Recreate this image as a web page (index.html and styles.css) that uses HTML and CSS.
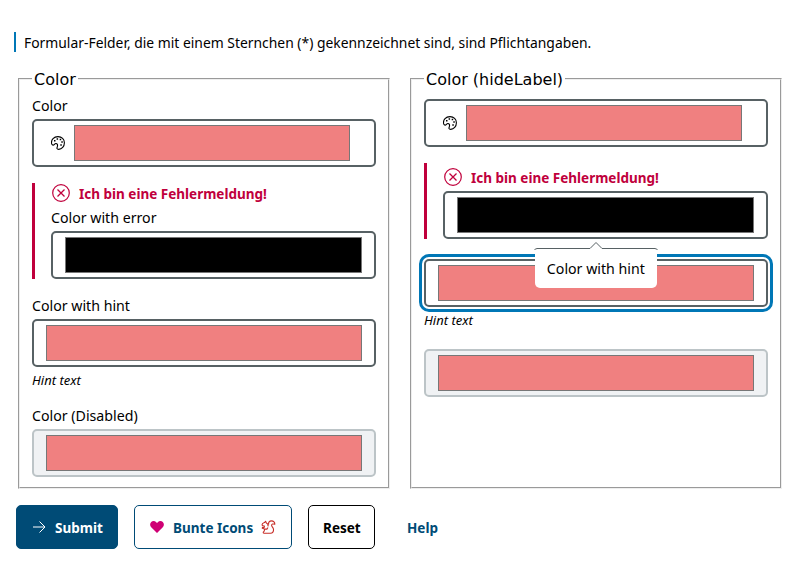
FILE: index.html
```html
<!DOCTYPE html>
<html lang="de">
<head>
<meta charset="utf-8">
<title>Color</title>
<link rel="stylesheet" href="styles.css">
</head>
<body>
<svg class="defs" width="0" height="0">
  <symbol id="palette" viewBox="0 0 14 14"><path d="M.6 7.7C-.1 3.500 3 .6 7 .6c3.800 0 6.400 2.700 6.400 6.100 0 3.700-2.600 6.700-5.700 6.700-2 0-2-1.200-1.400-2.700.6-1.700.1-3.200-1.400-3.200-1.300 0-1.700 1.800-2.900 1.600C1.200 9 .8 8.600.6 7.700Z" fill="none" stroke="currentColor" stroke-width="1.100"/><path d="M3 4h1.500v1.500H3zM5.600 2.300h1.500v1.500H5.600zM8.700 2.800h1.500v1.500H8.700zM10.300 5.300h1.500v1.500h-1.500zM9.300 8.300h1.500v1.500H9.300z" fill="currentColor"/></symbol>
  <symbol id="error" viewBox="0 0 18 18"><circle cx="9" cy="9" r="8.300" fill="none" stroke="currentColor" stroke-width="1.200"/><path d="m5.500 5.500 7 7m0-7-7 7" stroke="currentColor" stroke-width="1.300"/></symbol>
</svg>
<p class="note"><span class="text">Formular-Felder, die mit einem Sternchen (*) gekennzeichnet sind, sind Pflichtangaben.</span></p>
<form>
  <div class="columns">
    <fieldset>
      <legend>Color</legend>
      <label class="label">Color</label>
      <div class="field with-icon"><svg class="palette"><use href="#palette"/></svg><div class="swatch"></div></div>
      <div class="error">
        <div class="message"><svg><use href="#error"/></svg><span class="bold">Ich bin eine Fehlermeldung!</span></div>
        <label class="label">Color with error</label>
        <div class="field"><div class="swatch black"></div></div>
      </div>
      <label class="label">Color with hint</label>
      <div class="field"><div class="swatch"></div></div>
      <div class="hint">Hint text</div>
      <label class="label">Color (Disabled)</label>
      <div class="field disabled"><div class="swatch"></div></div>
    </fieldset>
    <fieldset>
      <legend>Color (hideLabel)</legend>
      <div class="field with-icon"><svg class="palette"><use href="#palette"/></svg><div class="swatch"></div></div>
      <div class="error">
        <div class="message unlabelled"><svg><use href="#error"/></svg><span class="bold">Ich bin eine Fehlermeldung!</span></div>
        <div class="field"><div class="swatch black"></div></div>
      </div>
      <div class="field focused"><div class="swatch"></div>
        <div class="tooltip"><svg class="edge" viewBox="0 0 124 10"><path d="M.5 9.500 3 8.500h53l6-6 6 6h53l2.500 1" fill="#fff" stroke="#576164"/></svg><span class="tip-text">Color with hint</span></div>
      </div>
      <div class="hint">Hint text</div>
      <div class="field disabled"><div class="swatch"></div></div>
    </fieldset>
  </div>
  <div class="actions">
    <button type="button" class="submit"><svg width="14" height="14" viewBox="0 0 14 14"><path d="M1 7h12M7.500 1.500 13 7l-5.500 5.500" fill="none" stroke="currentColor"/></svg><span class="bold">Submit</span></button>
    <button type="button" class="bunte"><svg width="14" height="14" viewBox="0 0 14 14"><path d="M7 13 1.200 7.200C-.3 5.600-.2 3.200 1.200 1.900 2.700.6 5 .8 6.200 2.200L7 3l.8-.8C9 .8 11.300.6 12.800 1.900c1.400 1.300 1.500 3.700 0 5.300Z" fill="#cf0074"/></svg><span class="bold">Bunte Icons</span><svg class="squirrel" width="15" height="14" viewBox="0 0 15 14"><path d="M7 6.300C7.300 5 6.700 3.500 5.300 2.900L4.600 1.300 3.400 2.600C2.200 3 1 3.900 1 4.900c0 .8 1.400 1 2.400 1.200L3.200 7.500 1.500 7.200 1.300 8.300l2.200.8-.2 1.900-1 1.200c-.2.700.1 1 .7 1h6.500c2.100 0 3.300-1.700 3-3.900-.2-1.700-1.900-2.600-1.900-4C10.600 3.900 12 3.600 13.800 4.300c.2-1.800-1.300-3.400-3.300-3.400C8.300.9 7.300 2.500 7.600 4.500M3.500 9.100h2.400L7 7.500" fill="none" stroke="#c72e28" stroke-width="1.100" stroke-linejoin="round"/></svg></button>
    <button type="button" class="reset"><span class="bold">Reset</span></button>
    <a class="help"><span class="bold">Help</span></a>
  </div>
</form>
</body>
</html>
```
FILE: styles.css
```css
* { box-sizing: border-box; }
body { margin: 0; padding: 32px 18px 0; background: #fff; color: #000; font-family: "Noto Sans", sans-serif; font-size: 15px; white-space: nowrap; }
.defs { display: none; }
.note { margin: 0 0 0 -4px; height: 20px; line-height: 21px; border-left: 2px solid #0077b6; padding-left: 8px; }
.text { display: inline-block; transform: scaleX(.925); transform-origin: left; }
.columns { display: grid; grid-template-columns: 372px 372px; gap: 20px; margin-top: 17px; height: 420px; }
fieldset { margin: 0; min-width: 0; padding: 10px 12px; border: 2px groove #eee; }
legend { height: 20px; padding: 0 2px; font: 16px/21px "DejaVu Sans", sans-serif; }
.label { display: block; width: max-content; height: 20px; line-height: 12px; transform: scaleX(.945); transform-origin: left; }
.field { position: relative; height: 48px; border: 2px solid #576164; border-radius: 5px; padding: 4px 12px; background: #fff; display: flex; align-items: center; }
.with-icon { padding-left: 17px; padding-right: 24px; }
.palette { width: 14px; height: 14px; margin-right: 9px; }
.swatch { flex: 1; height: 36px; background: #f08080; border: 1px solid #777; }
.black { background: #000; }
.error { margin: 16px 0 20px; border-left: 3px solid #c0003c; padding-left: 16px; }
.message { height: 28px; line-height: 21px; color: #c0003c; display: flex; }
.unlabelled { padding-top: 4px; }
.message svg { width: 18px; height: 18px; margin: 1px 9px 0 1px; }
.bold { display: inline-block; font-weight: 700; transform: scaleX(.9); transform-origin: left; }
.hint { height: 42px; line-height: 27px; font-style: italic; font-size: 13px; }
.disabled { background: #f0f2f4; border-color: #bcc4c7; }
.focused { outline: 3px solid #0077b6; outline-offset: 2px; }
.tooltip { position: absolute; left: 109px; top: -11px; width: 122px; height: 38px; line-height: 36px; text-align: center; background: #fff; border-radius: 0 0 5px 5px; }
.tip-text { display: inline-block; transform: scaleX(.945); }
.edge { position: absolute; left: -1px; top: -10px; width: 124px; height: 10px; }
.actions { display: flex; gap: 16px; margin: 16px 0 0 -2px; height: 44px; }
button { border: 1px solid #004b76; border-radius: 5px; padding: 0; background: #fff; color: #004b76; font: inherit; display: flex; align-items: center; }
.submit { width: 102px; background: #004b76; color: #fff; padding-left: 15px; gap: 9px; }
.bunte { width: 158px; padding-left: 15px; gap: 9px; }
.squirrel { margin-left: -10px; }
.reset { width: 67px; border-color: #000; color: #000; justify-content: center; }
.reset .bold { transform-origin: center; }
.help { color: #004b76; line-height: 44px; margin-left: 16px; }
```
